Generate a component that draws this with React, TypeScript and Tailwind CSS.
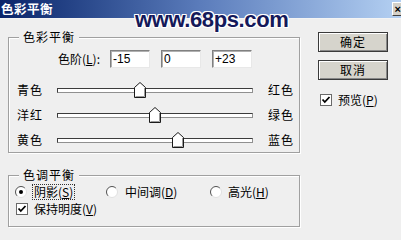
import React from "react";

const cjk = "font-['Noto_Sans_CJK_SC','Noto_Sans_CJK_JP',sans-serif]";

const levels = [
  { left: "青色", right: "红色", value: -15 },
  { left: "洋红", right: "绿色", value: 0 },
  { left: "黄色", right: "蓝色", value: 23 },
];

function Thumb() {
  return (
    <svg width="12" height="16" viewBox="0 0 12 16">
      <path d="M0.5 5.5 L6 0.5 L11.5 5.5 L11.5 15.5 L0.5 15.5 Z" fill="#fff" stroke="#1a1a1a" />
      <path d="M10.5 6 L10.5 14.5 L1.5 14.5" fill="none" stroke="#9a9a9a" />
    </svg>
  );
}

function Radio({ checked }: { checked?: boolean }) {
  return (
    <svg width="12" height="12" viewBox="0 0 12 12" className="shrink-0">
      <circle cx="6" cy="6" r="5.5" fill="#fff" />
      <path d="M2.11 9.89 A5.5 5.5 0 0 1 9.89 2.11" fill="none" stroke="#505050" />
      <path d="M9.89 2.11 A5.5 5.5 0 0 1 2.11 9.89" fill="none" stroke="#e0e0e0" />
      {checked && <circle cx="6" cy="6" r="2" fill="#000" />}
    </svg>
  );
}

function Check() {
  return (
    <svg width="12" height="12" viewBox="0 0 12 12" className="shrink-0">
      <rect x="0.5" y="0.5" width="11" height="11" fill="#fff" stroke="#6a6a6a" />
      <path d="M2.5 5.5 L4.8 8 L9.5 3" fill="none" stroke="#000" strokeWidth="1.8" />
    </svg>
  );
}

function NumInput({ value }: { value: string }) {
  return (
    <div className="w-[40px] h-[18px] bg-white border border-t-[#808080] border-l-[#808080] border-b-[#e8e8e8] border-r-[#e8e8e8] shadow-[inset_1px_1px_0_#b0b0b0] pl-[2px] text-[12px] leading-[16px] text-black font-['Liberation_Sans',Arial,sans-serif]">
      {value}
    </div>
  );
}

function Btn({ children }: { children: React.ReactNode }) {
  return (
    <button
      type="button"
      className={`w-[70px] h-[20px] border border-[#3a3a3a] bg-[#d6d4cc] shadow-[inset_1px_1px_0_#fff,inset_-1px_-1px_0_#888] text-[12px] leading-[18px] tracking-[1px] text-black ${cjk}`}
    >
      {children}
    </button>
  );
}

export default function App() {
  return (
    <div className={`relative w-[401px] h-[240px] overflow-hidden bg-[#efefef] text-black text-[12px] leading-[12px] ${cjk}`}>
      {/* title bar */}
      <div className="flex items-center justify-between h-[19px] bg-linear-to-r from-[#0a246a] via-[#5b7cbb] to-[#b4d0f2] border-b border-[#f4f4f4]">
        <span className="pl-[1px] text-white font-bold text-[12.5px] tracking-[0.5px]">色彩平衡</span>
        <div className="w-[9px] h-[14px] bg-[#d4d0c8] border-l border-t border-b border-[#fff] border-b-[#404040] flex items-center justify-end overflow-hidden text-[11px] font-bold font-['Liberation_Sans',Arial,sans-serif]">
          ×
        </div>
      </div>

      {/* watermark */}
      <div className="absolute left-[135px] top-[9px] text-[22px] leading-[22px] font-bold tracking-[-0.4px] text-[#14195a] font-['Liberation_Sans',Arial,sans-serif] [text-shadow:1px_1px_0_#fff,-1px_-1px_0_#fff,1px_-1px_0_#fff,-1px_1px_0_#fff,0_1px_0_#fff,0_-1px_0_#fff,1px_0_0_#fff,-1px_0_0_#fff]">
        www.68ps.com
      </div>

      <div className="flex pl-[8px] pt-[12px]">
        {/* left column */}
        <div className="flex flex-col w-[292px]">
          <fieldset className="border border-[#a0a0a0] shadow-[inset_1px_1px_0_#fff,1px_1px_0_#fff] pb-[2px]">
            <legend className="ml-[10px] px-[4px] bg-[#efefef] tracking-[1px]">色彩平衡</legend>
            <div className="flex items-center mt-[7px] h-[18px]">
              <span className="ml-[49px] w-[52px]">
                色阶(<span className="underline">L</span>):
              </span>
              <div className="flex gap-[11px]">
                <NumInput value="-15" />
                <NumInput value="0" />
                <NumInput value="+23" />
              </div>
            </div>
            <div className="flex flex-col gap-[5px] mt-[12px]">
              {levels.map((l) => (
                <div key={l.left} className="flex items-center h-[20px]">
                  <span className="ml-[8px] w-[40px] tracking-[1px]">{l.left}</span>
                  <div className="relative w-[196px] h-[5px] bg-white border border-[#3c3c3c] border-b-[#909090] border-r-[#909090]">
                    <div className="absolute top-[-7px]" style={{ left: 155 + l.value * 0.98 - 6 - 58 }}>
                      <Thumb />
                    </div>
                  </div>
                  <span className="ml-[15px] tracking-[1px]">{l.right}</span>
                </div>
              ))}
            </div>
          </fieldset>

          <fieldset className="mt-[16px] border border-[#a0a0a0] shadow-[inset_1px_1px_0_#fff,1px_1px_0_#fff] pb-[9px]">
            <legend className="ml-[10px] px-[4px] bg-[#efefef] tracking-[1px]">色调平衡</legend>
            <div className="flex items-center mt-[3px] h-[16px] pl-[6px]">
              <div className="flex items-center w-[91px]">
                <Radio checked />
                <span className="ml-[5px] px-[1px] py-[1px] border border-dotted border-[#333]">
                  阴影(<span className="underline">S</span>)
                </span>
              </div>
              <div className="flex items-center w-[104px]">
                <Radio />
                <span className="ml-[7px]">
                  中间调(<span className="underline">D</span>)
                </span>
              </div>
              <div className="flex items-center">
                <Radio />
                <span className="ml-[6px]">
                  高光(<span className="underline">H</span>)
                </span>
              </div>
            </div>
            <div className="flex items-center mt-[1px] h-[16px] pl-[7px]">
              <Check />
              <span className="ml-[6px]">
                保持明度(<span className="underline">V</span>)
              </span>
            </div>
          </fieldset>
        </div>

        {/* right column */}
        <div className="flex flex-col ml-[18px] mt-[1px]">
          <Btn>确定</Btn>
          <div className="mt-[8px]">
            <Btn>取消</Btn>
          </div>
          <div className="flex items-center mt-[13px] h-[14px] pl-[2px]">
            <Check />
            <span className="ml-[6px]">
              预览(<span className="underline">P</span>)
            </span>
          </div>
        </div>
      </div>
    </div>
  );
}
